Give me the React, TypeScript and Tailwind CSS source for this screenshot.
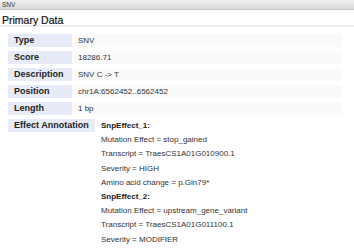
const ROWS = [
  { label: "Type", value: "SNV" },
  { label: "Score", value: "18286.71" },
  { label: "Description", value: "SNV C -> T" },
  { label: "Position", value: "chr1A:6562452..6562452" },
  { label: "Length", value: "1 bp" },
];

const EFFECTS = [
  {
    name: "SnpEffect_1:",
    lines: [
      "Mutation Effect = stop_gained",
      "Transcript = TraesCS1A01G010900.1",
      "Severity = HIGH",
      "Amino acid change = p.Gln79*",
    ],
  },
  {
    name: "SnpEffect_2:",
    lines: [
      "Mutation Effect = upstream_gene_variant",
      "Transcript = TraesCS1A01G011100.1",
      "Severity = MODIFIER",
    ],
  },
];

export default function App() {
  return (
    <div className="w-[354px] h-[250px] overflow-hidden bg-white text-[#222] font-['Liberation_Sans',Arial,sans-serif]">
      {/* Title bar */}
      <div className="h-[10px] bg-gradient-to-b from-[#f1f1f1] to-[#d9d9d9] border-b border-[#c4c4c4] px-[2px] text-[6.5px] leading-[9px] text-[#333]">
        SNV
      </div>

      {/* Section header */}
      <div className="px-[2px] pt-[4px] h-[17px] text-[10.5px] leading-[13px] text-[#111] [-webkit-text-stroke:0.2px_#111] border-b-2 border-[#eeeeee]">
        Primary Data
      </div>

      <div className="pl-[8px] pt-[7px] flex flex-col gap-[4px]">
        {ROWS.map((r) => (
          <div key={r.label} className="flex h-[13px]">
            <div className="w-[64px] bg-[#e7ebf8] pl-[6px] text-[9px] leading-[13px] font-bold">{r.label}</div>
            <div className="w-[270px] bg-[#fafafa] pl-[6px] text-[8px] leading-[13px] text-[#333]">{r.value}</div>
          </div>
        ))}

        <div className="flex">
          <div className="w-[87px] h-[13px] bg-[#e7ebf8] pl-[6px] text-[9px] leading-[13px] font-bold">Effect Annotation</div>
          <div className="pl-[6px] text-[8px] text-[#333]">
            {EFFECTS.map((e) => (
              <div key={e.name}>
                <div className="h-[14.2px] leading-[13px] font-bold text-[#1a1a1a]">{e.name}</div>
                {e.lines.map((l) => (
                  <div key={l} className="h-[14.2px] leading-[14px]">{l}</div>
                ))}
              </div>
            ))}
          </div>
        </div>
      </div>
    </div>
  );
}
